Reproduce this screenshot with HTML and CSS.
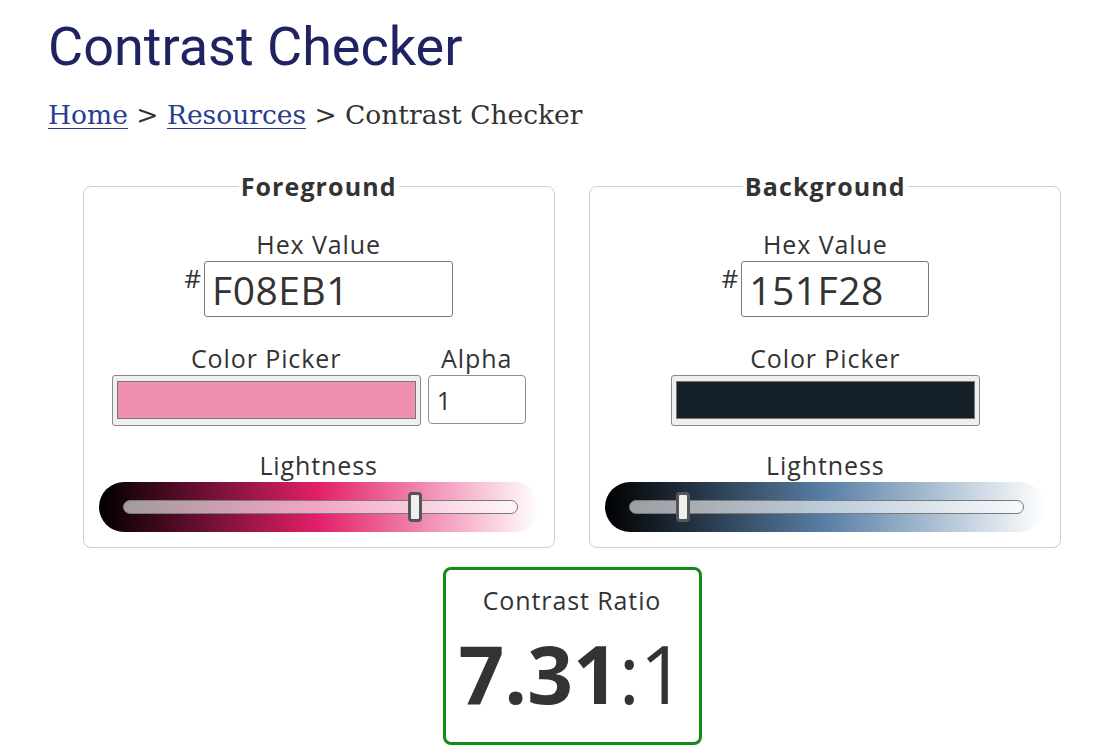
FILE: index.html
```html
<!DOCTYPE html>
<html lang="en">
<head>
<meta charset="utf-8">
<title>Contrast Checker</title>
<link rel="stylesheet" href="styles.css">
</head>
<body>
<main class="page">
  <h1 class="title">Contrast Checker</h1>
  <nav class="crumbs"><a href="#">Home</a> &gt; <a href="#">Resources</a> &gt; Contrast Checker</nav>

  <div class="panels">
    <fieldset class="panel">
      <legend class="legend">Foreground</legend>
      <div class="label">Hex Value</div>
      <div class="hex-row">
        <span class="hash">#</span>
        <input class="hex-input hex-wide" type="text" value="F08EB1">
      </div>
      <div class="picker-row">
        <div class="col">
          <div class="label">Color Picker</div>
          <div class="swatch-box"><div class="swatch swatch-fg"></div></div>
        </div>
        <div class="col">
          <div class="label">Alpha</div>
          <input class="alpha-input" type="text" value="1">
        </div>
      </div>
      <div class="label label-light">Lightness</div>
      <div class="slider slider-fg">
        <div class="track">
          <div class="thumb" style="left: 74.2%"></div>
        </div>
      </div>
    </fieldset>

    <fieldset class="panel">
      <legend class="legend">Background</legend>
      <div class="label">Hex Value</div>
      <div class="hex-row">
        <span class="hash">#</span>
        <input class="hex-input hex-narrow" type="text" value="151F28">
      </div>
      <div class="picker-row">
        <div class="col">
          <div class="label">Color Picker</div>
          <div class="swatch-box"><div class="swatch swatch-bg"></div></div>
        </div>
      </div>
      <div class="label label-light">Lightness</div>
      <div class="slider slider-bg">
        <div class="track">
          <div class="thumb" style="left: 13.5%"></div>
        </div>
      </div>
    </fieldset>
  </div>

  <div class="result-wrap">
    <div class="result">
      <div class="result-label">Contrast Ratio</div>
      <div class="ratio"><b>7.31</b>:1</div>
    </div>
  </div>
</main>
</body>
</html>
```

FILE: styles.css
```css
html, body {
  margin: 0;
  padding: 0;
  background: #fff;
}

body {
  font-family: "Open Sans", "Liberation Sans", sans-serif;
  color: #333;
}

.page {
  width: 1048px;
  padding-left: 48px;
}

.title {
  font-family: Roboto, "Liberation Sans", sans-serif;
  font-weight: 400;
  font-size: 54px;
  line-height: 64px;
  color: #1f2361;
  margin: 15px 0 0 0;
}

.crumbs {
  font-family: "DejaVu Serif", "Liberation Serif", serif;
  font-size: 26.5px;
  line-height: 32px;
  color: #333;
  margin-top: 20px;
}

.crumbs a {
  color: #2a3b8f;
  text-decoration: underline;
  text-decoration-thickness: 1px;
  text-underline-offset: 4px;
}

.panels {
  display: flex;
  justify-content: space-evenly;
  margin-top: 39px;
}

.panel {
  width: 472px;
  box-sizing: border-box;
  margin: 0;
  border: 1px solid #cfcfcf;
  border-radius: 8px;
  padding: 26px 14px 15px 14px;
  display: flex;
  flex-direction: column;
  align-items: center;
  min-width: 0;
}

.legend {
  margin: 0 auto;
  padding: 0 2px;
  font-size: 25px;
  letter-spacing: 1.1px;
  line-height: 32px;
  font-weight: 700;
  color: #333;
}

.label {
  font-size: 25px;
  letter-spacing: 0.9px;
  line-height: 32px;
  text-align: center;
  color: #333;
}

.hex-row {
  display: flex;
  align-items: flex-start;
  margin-top: 1px;
}

.hash {
  font-size: 26px;
  line-height: 26px;
  margin-top: 4px;
  margin-right: 3px;
  color: #333;
}

.hex-input {
  box-sizing: border-box;
  height: 56px;
  border: 1px solid #7a7a7a;
  border-radius: 3px;
  padding: 0 0 0 7px;
  font-family: "Open Sans", "Liberation Sans", sans-serif;
  font-size: 39px;
  letter-spacing: 0.5px;
  color: #333;
  background: #fff;
  outline: none;
}

.hex-wide { width: 249px; }
.hex-narrow { width: 188px; }

.picker-row {
  display: flex;
  gap: 7px;
  margin-top: 25px;
  align-items: flex-start;
}

.col {
  display: flex;
  flex-direction: column;
  align-items: center;
}

.swatch-box {
  box-sizing: border-box;
  width: 309px;
  height: 51px;
  margin-top: 1px;
  border: 1px solid #8a8a8a;
  border-radius: 3px;
  background: #efefef;
  padding: 5px 4px 6px 4px;
  display: flex;
}

.swatch {
  flex: 1;
  border: 1px solid #777;
}

.swatch-fg { background: #f08eb1; }
.swatch-bg { background: #151f28; }

.alpha-input {
  box-sizing: border-box;
  width: 98px;
  height: 49px;
  margin-top: 1px;
  border: 1px solid #8f8f8f;
  border-radius: 4px;
  padding: 0 0 0 8px;
  font-family: "Open Sans", "Liberation Sans", sans-serif;
  font-size: 25px;
  color: #333;
  background: #fff;
  outline: none;
}

.label-light {
  margin-top: 23px;
}

.slider {
  width: 440px;
  height: 50px;
  box-sizing: border-box;
  margin-top: 1px;
  border-radius: 25px;
  padding: 0 21px 0 24px;
  display: flex;
  align-items: center;
}

.slider-fg {
  background: linear-gradient(to right, #000 0%, #e3206a 50%, #fff 100%);
}

.slider-bg {
  background: linear-gradient(to right, #000 0%, #587fa6 50%, #fff 100%);
}

.track {
  position: relative;
  flex: 1;
  height: 14px;
  box-sizing: border-box;
  border: 1px solid #7a7a7a;
  border-radius: 7px;
  background: rgba(255, 255, 255, 0.6);
}

.thumb {
  position: absolute;
  top: -9px;
  width: 14px;
  height: 30px;
  margin-left: -7px;
  box-sizing: border-box;
  border: 3px solid #555;
  border-radius: 4px;
  background: #efefef;
}

.result-wrap {
  display: flex;
  justify-content: center;
  margin-top: 19px;
}

.result {
  width: 259px;
  height: 178px;
  box-sizing: border-box;
  border: 3px solid #168a16;
  border-radius: 8px;
  text-align: center;
  padding-top: 14px;
}

.result-label {
  font-size: 25px;
  letter-spacing: 0.9px;
  line-height: 32px;
  color: #333;
}

.ratio {
  font-size: 80px;
  line-height: 80px;
  color: #333;
  margin-top: 17px;
}

.ratio b {
  font-weight: 700;
}
```
